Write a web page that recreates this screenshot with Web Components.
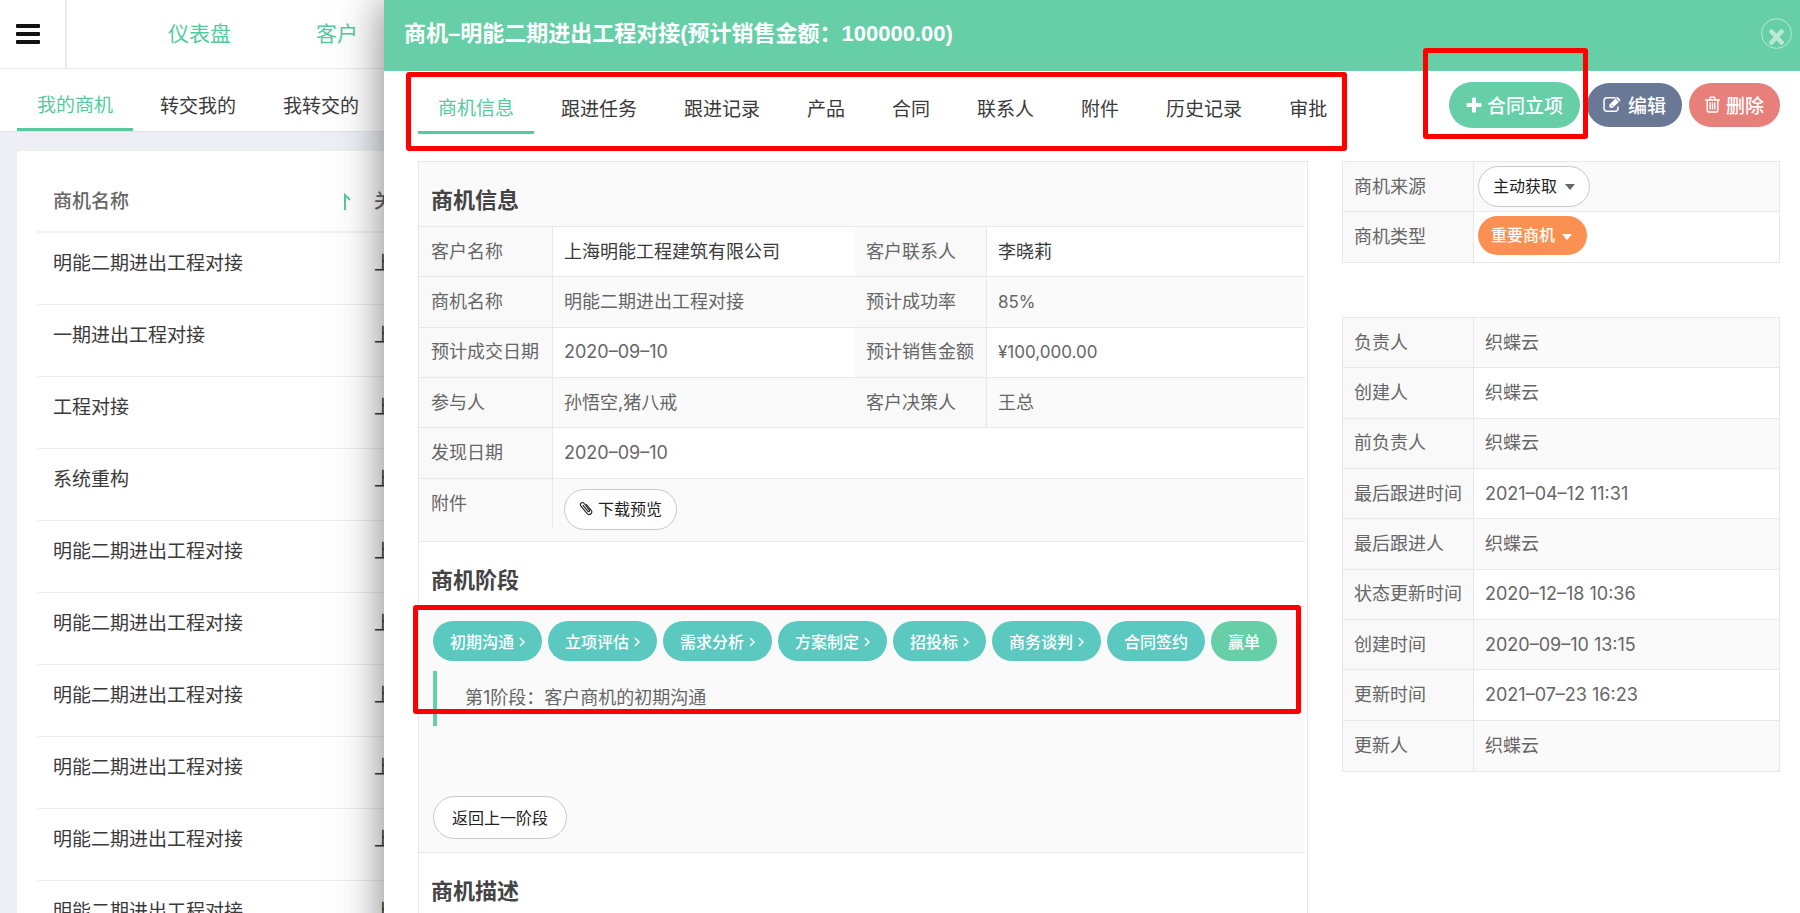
<!DOCTYPE html>
<html lang="zh-CN">
<head>
<meta charset="utf-8">
<title>商机详情</title>
<style>
  html, body { height: 100%; margin: 0; overflow: hidden; }
  body {
    font-family: Inter, "Noto Sans CJK SC", sans-serif;
    background: #eeeff4;
    --green: #66cfa8;
    --green-text: #55cb9f;
    --line: #e8e8e8;
    --stripe: #fafafa;
    --label: #666;
    --mark: #f00;
  }
</style>
</head>
<body>
<crm-app></crm-app>
<script>
const define = (name, html, setup) => {
  const tpl = document.createElement('template');
  tpl.innerHTML = html;
  customElements.define(name, class extends HTMLElement {
    constructor() {
      super();
      this.attachShadow({ mode: 'open' }).append(tpl.content.cloneNode(true));
    }
    connectedCallback() {
      if (setup && !this.ready) { this.ready = true; setup(this, this.shadowRoot); }
    }
  });
};

/* Rounded button; variants pick colour and size */
define('pill-button', `
<style>
  :host { display: inline-block; }
  button {
    display: flex; align-items: center; justify-content: center; gap: 5px; box-sizing: border-box;
    width: 100%; height: 40px; padding: 0 17px 1px; border: 0; border-radius: 22px;
    font: 500 16px/24px "Noto Sans CJK SC", sans-serif; color: #fff; background: #5bc9c0; white-space: nowrap;
  }
  :host([kind=plain]) button { height: 41px; padding: 0 14px 2px; font-weight: 400; color: #222; background: #fff; border: 1px solid #c8c8c8; }
  :host([kind=back]) button { height: 43px; padding: 0 18px 2px; font-weight: 400; color: #222; background: #fff; border: 1px solid #c8c8c8; }
  :host([kind=win]) button { background: var(--green); }
  :host([kind=create]) button { height: 46px; padding: 0 17px 1px; border-radius: 23px; font-size: 19px; background: var(--green); }
  :host([kind=edit]) button { height: 44px; padding: 0 16px 1px; font-size: 19px; background: #687895; gap: 6px; }
  :host([kind=remove]) button { height: 44px; padding: 0 16px 1px; font-size: 19px; background: #e7807a; gap: 6px; }
  ::slotted(svg[slot=after]) { margin-top: 2px; }
</style>
<button type="button"><slot name="before"></slot><slot></slot><slot name="after"></slot></button>`);

define('pill-select', `
<style>
  :host { display: inline-block; position: relative; vertical-align: top; }
  select {
    appearance: none; box-sizing: border-box; height: 41px; padding: 0 31px 3px 14px; border: 1px solid #c8c8c8; border-radius: 21px;
    font: 400 16px/24px "Noto Sans CJK SC", sans-serif; color: #222; background: #fff;
  }
  :host([kind=orange]) { color: #fff; }
  :host([kind=orange]) select { height: 39px; padding: 0 31px 3px 13px; border: 0; font-weight: 500; color: #fff; background: #fa9153; }
  svg { position: absolute; right: 15px; top: 18px; pointer-events: none; }
</style>
<select></select>
<svg width="10" height="6" viewBox="0 0 10 6"><path d="M0 0h10L5 6z" fill="currentColor"/></svg>`,
(host, root) => {
  const select = root.querySelector('select');
  select.setAttribute('aria-label', host.getAttribute('label'));
  select.add(new Option(host.getAttribute('value')));
});

/* Tab strip: names come from the items attribute, the first is active */
define('tab-strip', `
<style>
  :host { display: block; }
  nav { display: flex; gap: 7px; }
  a {
    box-sizing: border-box; height: 62px; padding: 24px 20px 0; text-decoration: none; white-space: nowrap;
    font-size: 19px; line-height: 28px; color: #3a3a3a; border-bottom: 3px solid transparent;
  }
  a.on { padding-top: 23px; color: var(--green-text); border-color: var(--green-text); }
</style>
<nav></nav>`,
(host, root) => {
  root.querySelector('nav').innerHTML = host.getAttribute('items').split('|')
    .map((t, i) => `<a href="#"${i ? '' : ' class="on"'}>${t}</a>`).join('');
});

define('top-bar', `
<style>
  :host { display: flex; height: 68px; background: #fff; border-bottom: 1px solid #e6e7ec; }
  button { width: 67px; padding: 0 0 0 16px; border: 0; border-right: 2px solid #e9eaee; background: none; display: flex; align-items: center; }
  nav { display: flex; align-items: center; gap: 85px; padding-left: 101px; }
  a { font-size: 21px; line-height: 32px; color: var(--green-text); text-decoration: none; }
</style>
<button type="button" aria-label="菜单"><svg width="24" height="20" viewBox="0 0 24 20" fill="#111"><rect width="24" height="4" rx="1"/><rect y="8" width="24" height="4" rx="1"/><rect y="16" width="24" height="4" rx="1"/></svg></button>
<nav><a href="#">仪表盘</a><a href="#">客户</a></nav>`);

define('deal-list', `
<style>
  :host { display: block; margin: 19px 17px 0; padding: 0 20px; background: #fff; border-radius: 4px; }
  table { width: 100%; table-layout: fixed; border-collapse: collapse; font-size: 19px; line-height: 28px; color: #3a3a3a; }
  th, td { box-sizing: border-box; height: 72px; padding: 0 16px 8px; text-align: left; font-weight: 400; border-bottom: 1px solid #eee; white-space: nowrap; }
  th { height: 81px; padding: 22px 16px 0; font-weight: 500; color: #666; border-bottom: 2px solid #f2f2f4; }
  th:first-child { width: 321px; padding-right: 7px; }
  div { display: flex; align-items: center; justify-content: space-between; }
</style>
<table><thead><tr>
  <th><div>商机名称<svg width="8" height="18" viewBox="0 0 8 18" fill="none" stroke="#55cb9f" stroke-width="2"><path d="M2 17V2l5 5"/></svg></div></th>
  <th>关</th></tr></thead><tbody></tbody></table>`,
(host, root) => {
  const deal = '明能二期进出工程对接';
  root.querySelector('tbody').innerHTML = [deal, '一期进出工程对接', '工程对接', '系统重构', deal, deal, deal, deal, deal, deal]
    .map(n => `<tr><td>${n}</td><td>上</td></tr>`).join('');
});

const fieldCss = `
  table { width: 100%; table-layout: fixed; border-collapse: separate; border-spacing: 0; font-size: 18px; line-height: 26px; color: #666; }
  th, td { box-sizing: border-box; height: 50px; padding: 0 0 0 11px; text-align: left; font-weight: 400; white-space: nowrap; border-bottom: 1px solid var(--line); }
  th { color: var(--label); background: #f9f9f9; border-right: 1px solid var(--line); }
  data { font-size: 17px; }`;

define('deal-info', `
<style>
  :host { display: block; background: var(--stripe); padding-bottom: 12px; }
  ${fieldCss}
  table { height: 302px; }
  th { padding-left: 12px; }
  th + td ~ th { padding-left: 11px; }
  tr:nth-child(odd) td { background: #fff; }
  tr:nth-child(even) td { background: var(--stripe); }
  tr:last-child > * { border-bottom: 0; }
  td a { color: #3a3a3a; text-decoration: none; }
  .file { height: 30px; }
  .c1 { width: 134px; } .c2 { width: 302px; } .c3 { width: 132px; }
</style>
<table>
  <colgroup><col class="c1"><col class="c2"><col class="c3"><col></colgroup>
  <tbody>
  <tr><th>客户名称</th><td><a href="#">上海明能工程建筑有限公司</a></td><th>客户联系人</th><td><a href="#">李晓莉</a></td></tr>
  <tr><th>商机名称</th><td>明能二期进出工程对接</td><th>预计成功率</th><td><data value="85">85%</data></td></tr>
  <tr><th>预计成交日期</th><td><time>2020–09–10</time></td><th>预计销售金额</th><td><data value="100000">¥100,000.00</data></td></tr>
  <tr><th>参与人</th><td>孙悟空,猪八戒</td><th>客户决策人</th><td>王总</td></tr>
  <tr><th>发现日期</th><td colspan="3"><time>2020–09–10</time></td></tr>
  <tr><th>附件</th><td colspan="3"><div class="file"><pill-button kind="plain"><svg slot="before" width="14" height="15" viewBox="0 0 14 15" fill="none" stroke="#222" stroke-width="1.1" stroke-linecap="round"><path d="M4 4.400l4.800 5.800c1 1.100 2.300 0 1.500-1.100L5.200 2.500C3.400.3.300 2.600 1.800 4.900l6.200 7.500c2.500 2.800 6.200-.2 4.200-3.100L7.400 3.500"/></svg>下载预览</pill-button></div></td></tr>
  </tbody>
</table>`);

define('deal-stages', `
<style>
  :host { display: block; position: relative; padding: 14px 14px 13px; background: var(--stripe); }
  .steps { display: flex; gap: 6px; }
  blockquote { box-sizing: border-box; height: 55px; margin: 10px 0 70px; padding: 14px 28px; border-left: 4px solid var(--green); font-size: 18px; line-height: 26px; color: #666; }
  .mark { position: absolute; inset: -2px 4px auto -6px; height: 99px; border: 5px solid var(--mark); border-radius: 3px; pointer-events: none; }
</style>
<div class="steps"></div>
<blockquote>第1阶段：客户商机的初期沟通</blockquote>
<pill-button kind="back">返回上一阶段</pill-button>
<div class="mark"></div>`,
(host, root) => {
  const chevron = '<svg slot="after" width="6" height="10" viewBox="0 0 6 10" fill="none" stroke="#fff" stroke-width="1.500"><path d="M1 1l4 4-4 4"/></svg>';
  root.querySelector('.steps').innerHTML =
    ['初期沟通', '立项评估', '需求分析', '方案制定', '招投标', '商务谈判'].map(s => `<pill-button>${s}${chevron}</pill-button>`).join('')
    + '<pill-button>合同签约</pill-button><pill-button kind="win">赢单</pill-button>';
});

/* Titled block inside the main panel */
define('panel-section', `
<style>
  :host { display: block; border-bottom: 1px solid var(--line); }
  h2 { box-sizing: border-box; height: 65px; margin: 0; padding: 22px 12px 0; font-size: 22px; line-height: 32px; font-weight: 600; color: #444; border-bottom: 1px solid var(--line); }
  :host([shade]) h2 { background: var(--stripe); }
</style>
<h2></h2><slot></slot>`,
(host, root) => { root.querySelector('h2').textContent = host.getAttribute('heading'); });

define('side-info', `
<style>
  :host { display: flex; flex-direction: column; gap: 54px; }
  ${fieldCss}
  table { border: 1px solid var(--line); }
  tr:nth-child(odd) td { background: var(--stripe); }
  tr:last-child > * { border-bottom: 0; }
  th { width: 131px; }
  .picks td { padding: 4px 0 0 4px; vertical-align: top; }
  .log { height: 455px; }
</style>
<table class="picks"><tbody>
  <tr><th>商机来源</th><td><pill-select label="商机来源" value="主动获取"></pill-select></td></tr>
  <tr><th>商机类型</th><td><pill-select kind="orange" label="商机类型" value="重要商机"></pill-select></td></tr>
</tbody></table>
<table class="log"><tbody></tbody></table>`,
(host, root) => {
  const me = '织蝶云', t = s => `<time>${s}</time>`;
  root.querySelector('.log tbody').innerHTML = [
    ['负责人', me], ['创建人', me], ['前负责人', me], ['最后跟进时间', t('2021–04–12 11:31')], ['最后跟进人', me],
    ['状态更新时间', t('2020–12–18 10:36')], ['创建时间', t('2020–09–10 13:15')], ['更新时间', t('2021–07–23 16:23')], ['更新人', me]
  ].map(([k, v]) => `<tr><th>${k}</th><td>${v}</td></tr>`).join('');
});

define('deal-drawer', `
<style>
  :host { display: block; background: #fff; box-shadow: 0 0 42px rgba(0, 0, 0, .5); }
  header { box-sizing: border-box; height: 71px; padding: 0 8px 4px 20px; display: flex; align-items: center; justify-content: space-between; background: var(--green); }
  h1 { margin: 0; font: 700 22px/32px "Liberation Sans", "Noto Sans CJK SC", sans-serif; color: #fff; white-space: nowrap; }
  .close { padding: 0; border: 0; background: none; display: flex; }
  .body { padding: 0 20px 0 34px; }
  .bar { height: 90px; display: flex; justify-content: space-between; }
  .tabs { position: relative; height: 80px; }
  .tabs tab-strip { padding-top: 1px; }
  .mark { position: absolute; border: 5px solid var(--mark); border-radius: 3px; pointer-events: none; }
  .tabs .mark { inset: 1px 0 0 -12px; }
  .actions { display: flex; align-items: flex-start; gap: 7px; padding-top: 12px; }
  .create { position: relative; margin-top: -1px; z-index: 1; }
  .create .mark { inset: -34px -8px -11px -26px; }
  .cols { display: grid; grid-template-columns: minmax(0, 1fr) 438px; gap: 34px; align-items: start; }
  .panel { border: 1px solid var(--line); padding-right: 2px; }
  .text { height: 180px; background: var(--stripe); }
</style>
<header>
  <h1>商机–明能二期进出工程对接(预计销售金额：100000.00)</h1>
  <button class="close" type="button" aria-label="关闭"><svg width="31" height="31" viewBox="0 0 31 31" fill="none" stroke="#fff" opacity=".55"><circle cx="15.500" cy="15.500" r="14.900"/><path d="M10.500 13.500l10 11M20.500 13.500l-10 11" stroke-width="4.500" stroke-linecap="round"/></svg></button>
</header>
<div class="body">
  <div class="bar">
    <div class="tabs">
      <tab-strip items="商机信息|跟进任务|跟进记录|产品|合同|联系人|附件|历史记录|审批"></tab-strip>
      <div class="mark"></div>
    </div>
    <div class="actions">
      <div class="create"><pill-button kind="create"><svg slot="before" width="16" height="16" viewBox="0 0 16 16" fill="#fff"><path d="M6 1.500q0-1 1-1h2q1 0 1 1V6h4.500q1 0 1 1v2q0 1-1 1H10v4.500q0 1-1 1H7q-1 0-1-1V10H1.500q-1 0-1-1V7q0-1 1-1H6z"/></svg>合同立项</pill-button><div class="mark"></div></div>
      <pill-button kind="edit"><svg slot="before" width="19" height="17" viewBox="0 0 19 17" fill="none" stroke="#fff" stroke-width="1.500"><path d="M12.500 1.800H4Q1 1.800 1 4.800v7.500q0 3 3 3h8q3 0 3-3v-1.800"/><path d="M6.500 11.800V8.500L14.200.8l3.500 3.300-7.800 7.700z" fill="#fff" stroke="none"/><path d="M8.500 8.800l1.500 1.500M12.800 2.500l3.200 3" stroke="#687895" stroke-width="1"/></svg>编辑</pill-button>
      <pill-button kind="remove"><svg slot="before" width="15" height="17" viewBox="0 0 15 17" fill="none" stroke="#fff" stroke-width="1.400"><path d="M0 4h15M4.500 4l1-2.800h4L10.500 4M2.200 4v10.500q0 1.500 1.500 1.500h7.600q1.500 0 1.500-1.500V4M5.200 6.500v7M7.500 6.500v7M9.800 6.500v7"/></svg>删除</pill-button>
    </div>
  </div>
  <div class="cols">
    <div class="panel">
      <panel-section heading="商机信息" shade><deal-info></deal-info></panel-section>
      <panel-section heading="商机阶段"><deal-stages></deal-stages></panel-section>
      <panel-section heading="商机描述"><div class="text"></div></panel-section>
    </div>
    <side-info></side-info>
  </div>
</div>`);

define('crm-app', `
<style>
  :host { display: block; position: relative; height: 100%; overflow: hidden; }
  .tabs { height: 62px; padding-left: 17px; background: #fff; border-bottom: 1px solid #e2e3e8; }
  deal-drawer { position: absolute; top: 0; left: 384px; right: 0; }
</style>
<top-bar></top-bar>
<div class="tabs"><tab-strip items="我的商机|转交我的|我转交的"></tab-strip></div>
<deal-list></deal-list>
<deal-drawer></deal-drawer>`);
</script>
</body>
</html>
